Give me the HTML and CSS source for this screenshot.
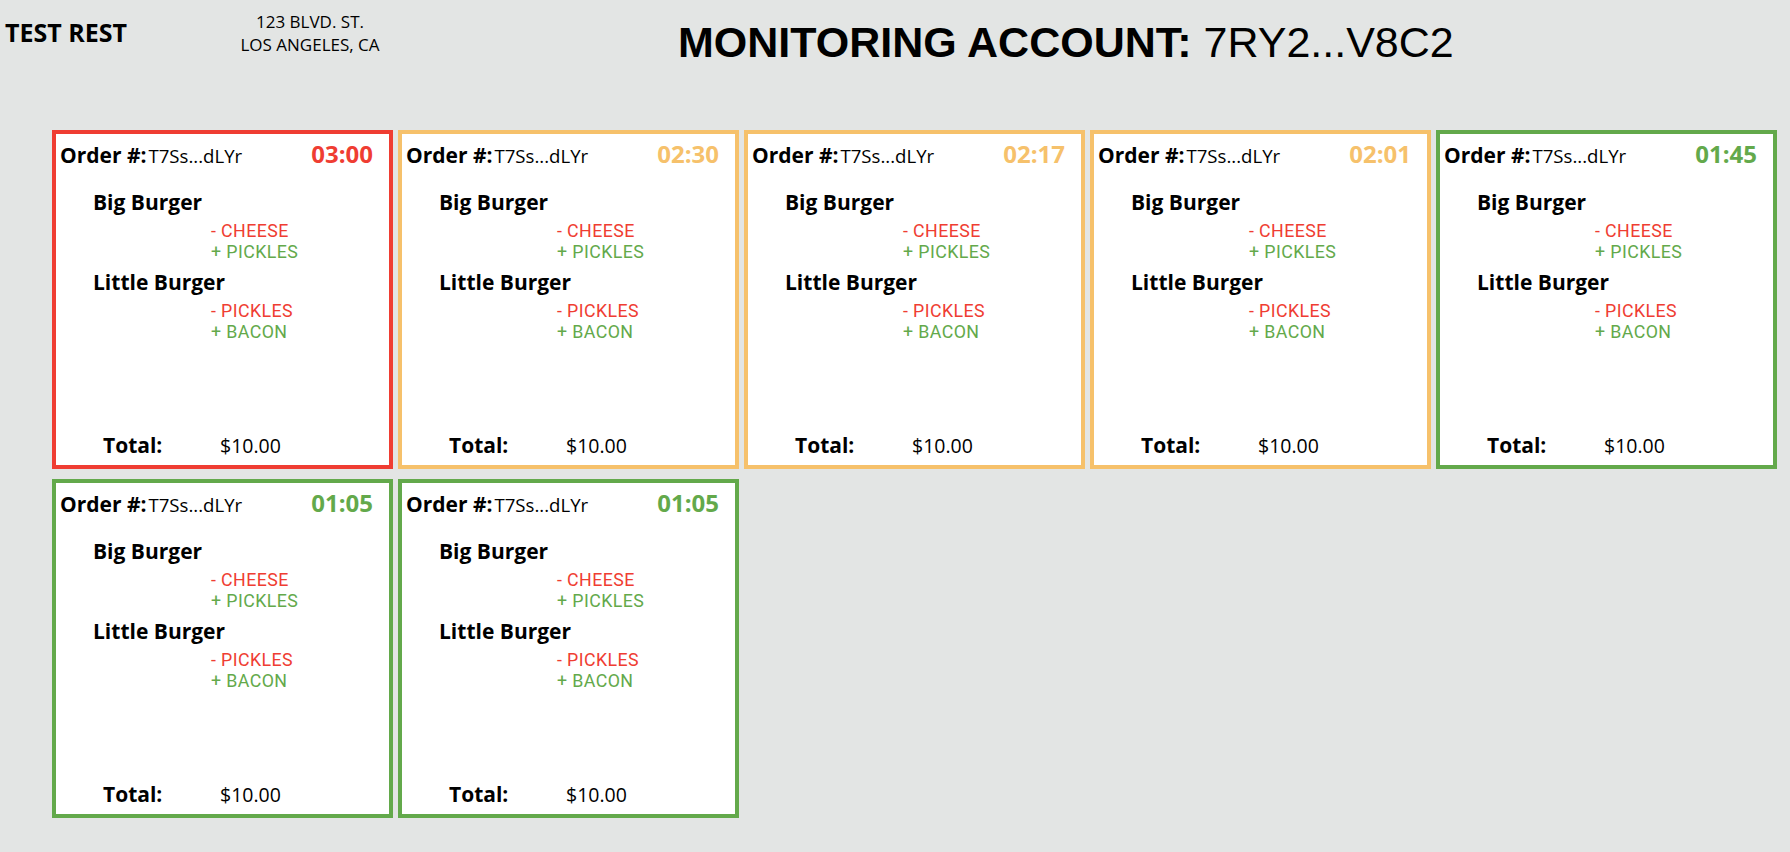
FILE: index.html
```html
<!DOCTYPE html>
<html lang="en">
<head>
<meta charset="utf-8">
<title>Monitoring Account</title>
<link rel="stylesheet" href="styles.css">
</head>
<body>
<header class="top">
  <div class="brand">TEST REST</div>
  <div class="address">123 BLVD. ST.<br>LOS ANGELES, CA</div>
  <h1 class="title"><span class="title-bold">MONITORING ACCOUNT:</span> <span class="title-id">7RY2...V8C2</span></h1>
</header>
<main class="board">
  <section class="card card-red">
    <div class="card-head"><span class="order-label">Order #:</span><span class="order-id">T7Ss...dLYr</span><span class="timer">03:00</span></div>
    <div class="item"><div class="item-name">Big Burger</div><div class="mods"><div class="mod-minus">- CHEESE</div><div class="mod-plus">+ PICKLES</div></div></div>
    <div class="item"><div class="item-name">Little Burger</div><div class="mods"><div class="mod-minus">- PICKLES</div><div class="mod-plus">+ BACON</div></div></div>
    <div class="card-foot"><span class="total-label">Total:</span><span class="total-value">$10.00</span></div>
  </section>
  <section class="card card-orange">
    <div class="card-head"><span class="order-label">Order #:</span><span class="order-id">T7Ss...dLYr</span><span class="timer">02:30</span></div>
    <div class="item"><div class="item-name">Big Burger</div><div class="mods"><div class="mod-minus">- CHEESE</div><div class="mod-plus">+ PICKLES</div></div></div>
    <div class="item"><div class="item-name">Little Burger</div><div class="mods"><div class="mod-minus">- PICKLES</div><div class="mod-plus">+ BACON</div></div></div>
    <div class="card-foot"><span class="total-label">Total:</span><span class="total-value">$10.00</span></div>
  </section>
  <section class="card card-orange">
    <div class="card-head"><span class="order-label">Order #:</span><span class="order-id">T7Ss...dLYr</span><span class="timer">02:17</span></div>
    <div class="item"><div class="item-name">Big Burger</div><div class="mods"><div class="mod-minus">- CHEESE</div><div class="mod-plus">+ PICKLES</div></div></div>
    <div class="item"><div class="item-name">Little Burger</div><div class="mods"><div class="mod-minus">- PICKLES</div><div class="mod-plus">+ BACON</div></div></div>
    <div class="card-foot"><span class="total-label">Total:</span><span class="total-value">$10.00</span></div>
  </section>
  <section class="card card-orange">
    <div class="card-head"><span class="order-label">Order #:</span><span class="order-id">T7Ss...dLYr</span><span class="timer">02:01</span></div>
    <div class="item"><div class="item-name">Big Burger</div><div class="mods"><div class="mod-minus">- CHEESE</div><div class="mod-plus">+ PICKLES</div></div></div>
    <div class="item"><div class="item-name">Little Burger</div><div class="mods"><div class="mod-minus">- PICKLES</div><div class="mod-plus">+ BACON</div></div></div>
    <div class="card-foot"><span class="total-label">Total:</span><span class="total-value">$10.00</span></div>
  </section>
  <section class="card card-green">
    <div class="card-head"><span class="order-label">Order #:</span><span class="order-id">T7Ss...dLYr</span><span class="timer">01:45</span></div>
    <div class="item"><div class="item-name">Big Burger</div><div class="mods"><div class="mod-minus">- CHEESE</div><div class="mod-plus">+ PICKLES</div></div></div>
    <div class="item"><div class="item-name">Little Burger</div><div class="mods"><div class="mod-minus">- PICKLES</div><div class="mod-plus">+ BACON</div></div></div>
    <div class="card-foot"><span class="total-label">Total:</span><span class="total-value">$10.00</span></div>
  </section>
  <section class="card card-green">
    <div class="card-head"><span class="order-label">Order #:</span><span class="order-id">T7Ss...dLYr</span><span class="timer">01:05</span></div>
    <div class="item"><div class="item-name">Big Burger</div><div class="mods"><div class="mod-minus">- CHEESE</div><div class="mod-plus">+ PICKLES</div></div></div>
    <div class="item"><div class="item-name">Little Burger</div><div class="mods"><div class="mod-minus">- PICKLES</div><div class="mod-plus">+ BACON</div></div></div>
    <div class="card-foot"><span class="total-label">Total:</span><span class="total-value">$10.00</span></div>
  </section>
  <section class="card card-green">
    <div class="card-head"><span class="order-label">Order #:</span><span class="order-id">T7Ss...dLYr</span><span class="timer">01:05</span></div>
    <div class="item"><div class="item-name">Big Burger</div><div class="mods"><div class="mod-minus">- CHEESE</div><div class="mod-plus">+ PICKLES</div></div></div>
    <div class="item"><div class="item-name">Little Burger</div><div class="mods"><div class="mod-minus">- PICKLES</div><div class="mod-plus">+ BACON</div></div></div>
    <div class="card-foot"><span class="total-label">Total:</span><span class="total-value">$10.00</span></div>
  </section>
</main>
</body>
</html>
```

FILE: styles.css
```css
* { box-sizing: border-box; }

body {
  margin: 0;
  background: #e3e5e4;
  color: #000;
  font-family: "Open Sans", "Noto Sans", sans-serif;
}

.top {
  display: grid;
  grid-template-columns: 210px 200px 1fr;
  align-items: start;
  height: 130px;
}

.brand {
  padding-left: 5px;
  margin-top: 17px;
  font-size: 25px;
  line-height: 30px;
  font-weight: 700;
}

.address {
  margin-top: 10px;
  text-align: center;
  font-size: 17px;
  line-height: 23px;
}

.title {
  margin: 17px 0 0;
  padding-left: 268px;
  font-family: "Liberation Sans", Arial, sans-serif;
  font-size: 43px;
  line-height: 50px;
  font-weight: 400;
  white-space: nowrap;
}

.title-bold { font-weight: 700; }
.title-id { font-weight: 400; }

.board {
  display: grid;
  grid-template-columns: repeat(5, 341px);
  grid-auto-rows: 339px;
  column-gap: 5px;
  row-gap: 10px;
  padding-left: 52px;
}

.card {
  display: flex;
  flex-direction: column;
  background: #fff;
  border: 4px solid #ef3d32;
  padding: 6px 16px 6px 4px;
}

.card-red { border-color: #ef3d32; }
.card-orange { border-color: #f6c16b; }
.card-green { border-color: #63a94b; }

.card-head {
  display: flex;
  align-items: baseline;
  line-height: 28px;
}

.order-label {
  font-size: 21px;
  font-weight: 700;
  margin-right: 2px;
}

.order-id {
  font-size: 18.6px;
}

.timer {
  margin-left: auto;
  font-size: 24px;
  font-weight: 700;
}

.card-red .timer { color: #ef3d32; }
.card-orange .timer { color: #f6c16b; }
.card-green .timer { color: #63a94b; }

.item {
  padding-left: 33px;
}

.card-head + .item { margin-top: 19px; }
.item + .item { margin-top: 7px; }

.item-name {
  font-size: 21px;
  line-height: 26px;
  font-weight: 700;
}

.mods {
  margin-top: 5px;
  padding-left: 118px;
  font-family: "Roboto", "Open Sans", sans-serif;
  font-size: 17.8px;
  line-height: 21px;
  letter-spacing: 0.4px;
}

.mod-minus { color: #ef3d32; }
.mod-plus { color: #63a94b; }

.card-foot {
  margin-top: auto;
  display: flex;
  align-items: baseline;
  padding-left: 43px;
  line-height: 26px;
}

.total-label {
  width: 117px;
  font-size: 21px;
  font-weight: 700;
}

.total-value {
  font-size: 19.5px;
}
```
